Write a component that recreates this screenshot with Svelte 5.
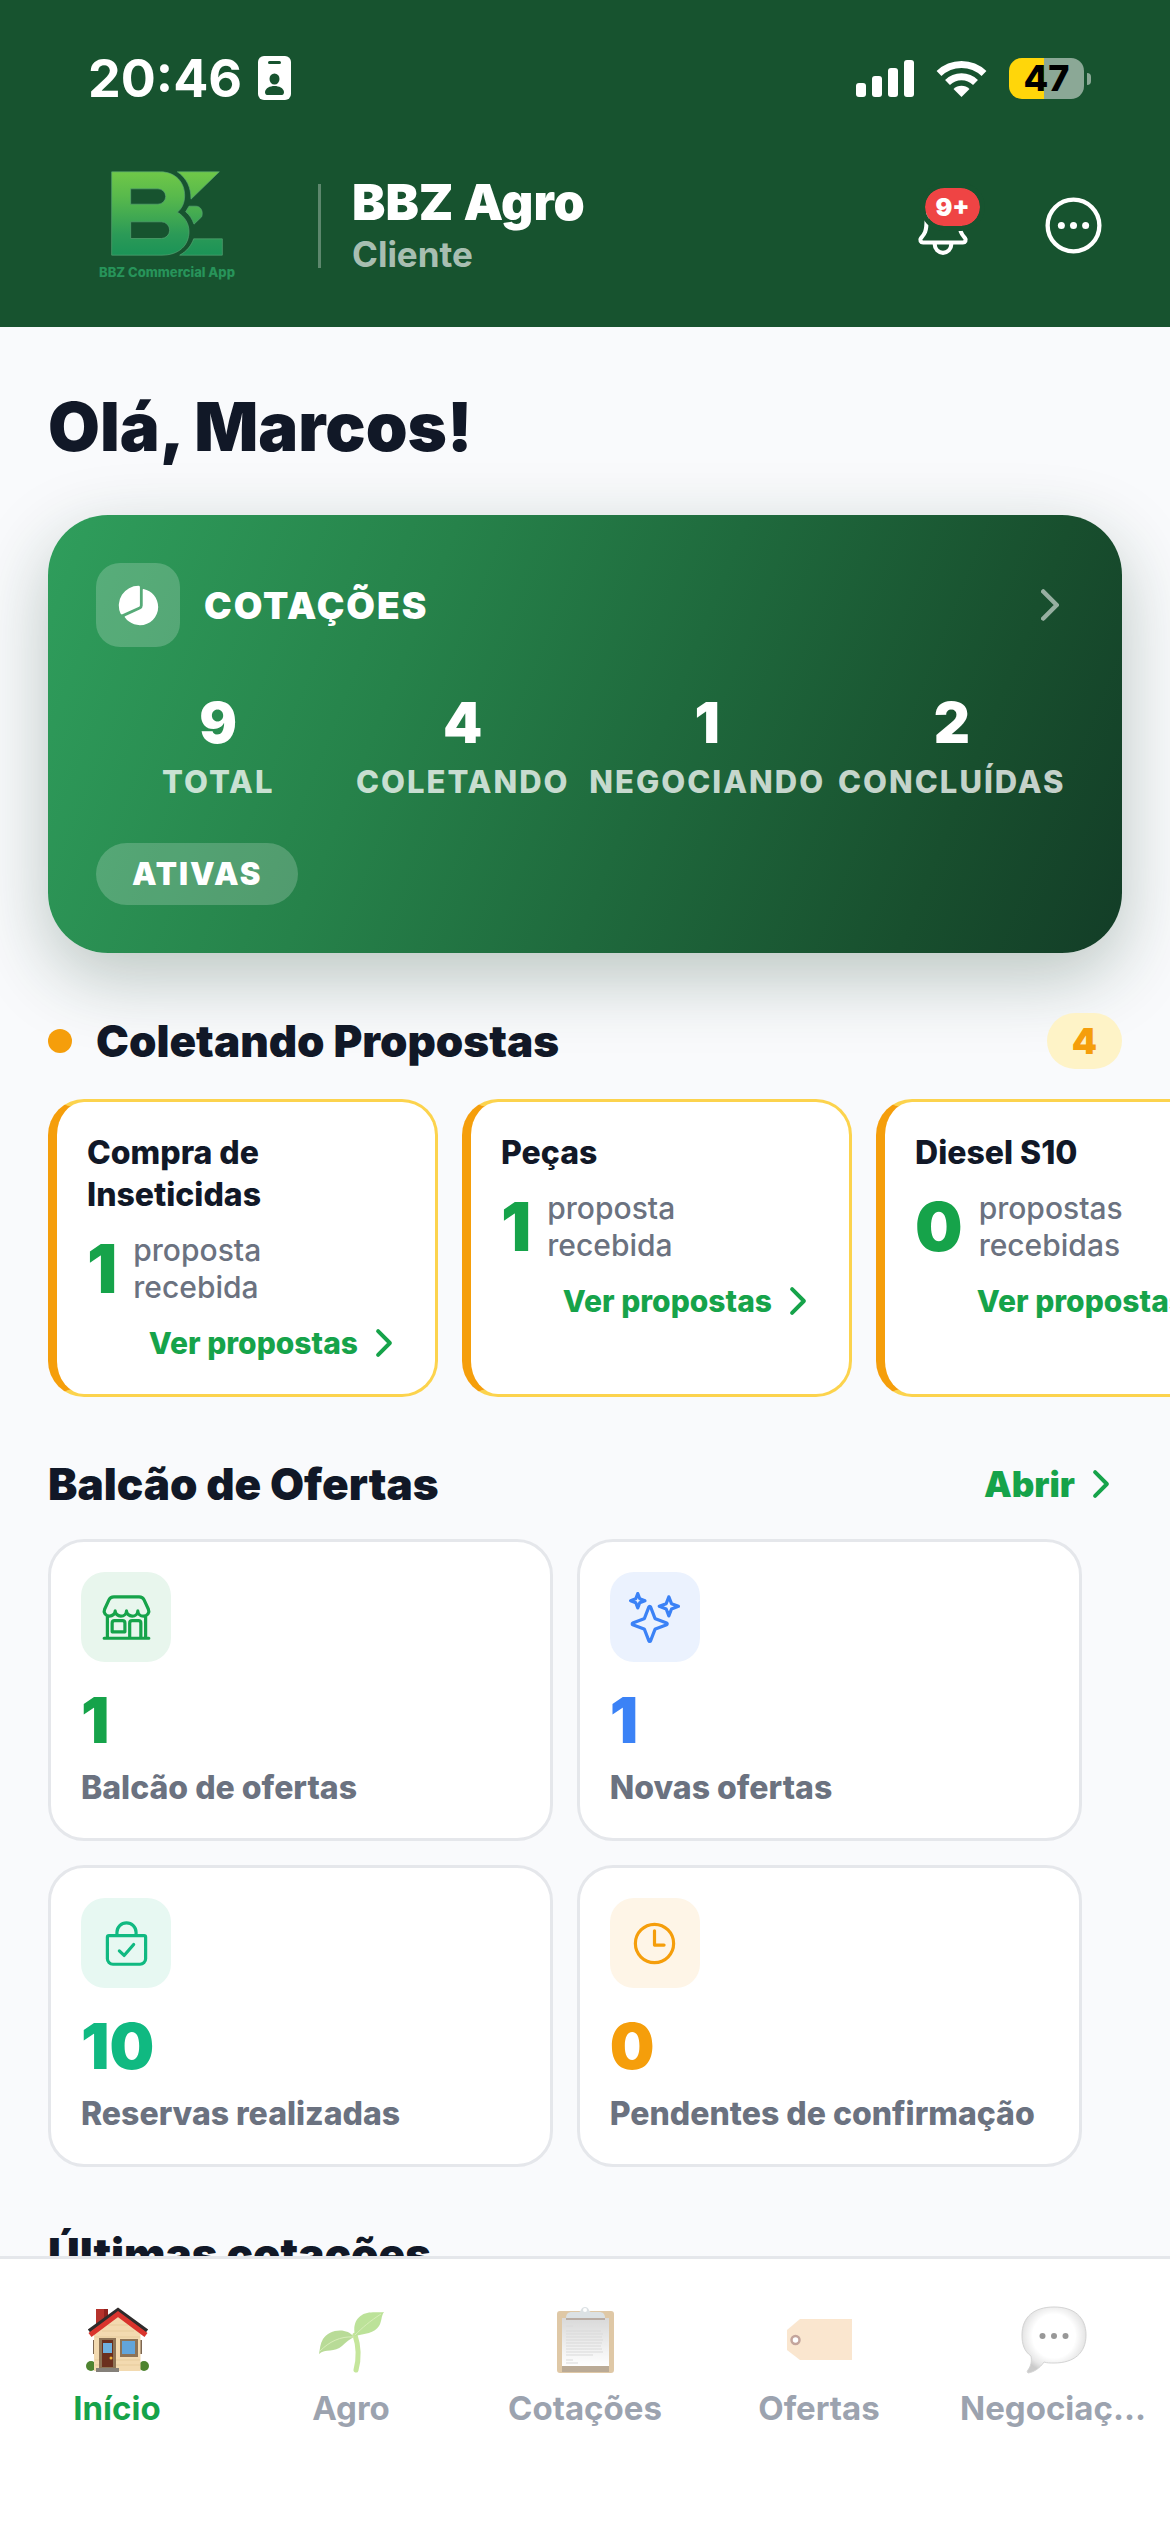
<script lang="ts">
	type Proposal = { title: string; count: number };
	type Offer = { icon: string; value: number; label: string; tone: string };
	type Tab = { icon: string; label: string };

	const stats = [
		{ value: 9, label: 'TOTAL' },
		{ value: 4, label: 'COLETANDO' },
		{ value: 1, label: 'NEGOCIANDO' },
		{ value: 2, label: 'CONCLUÍDAS' }
	];

	const proposals: Proposal[] = [
		{ title: 'Compra de Inseticidas', count: 1 },
		{ title: 'Peças', count: 1 },
		{ title: 'Diesel S10', count: 0 }
	];

	const offers: Offer[] = [
		{ icon: 'store', value: 1, label: 'Balcão de ofertas', tone: 'green' },
		{ icon: 'sparkles', value: 1, label: 'Novas ofertas', tone: 'blue' },
		{ icon: 'bag', value: 10, label: 'Reservas realizadas', tone: 'emerald' },
		{ icon: 'clock', value: 0, label: 'Pendentes de confirmação', tone: 'amber' }
	];

	const tabs: Tab[] = [
		{ icon: 'house', label: 'Início' },
		{ icon: 'sprout', label: 'Agro' },
		{ icon: 'clipboard', label: 'Cotações' },
		{ icon: 'tag', label: 'Ofertas' },
		{ icon: 'bubble', label: 'Negociaç...' }
	];

	let activeTab = $state('house');
</script>

{#snippet chevron()}
	<svg class="chevron" viewBox="0 0 512 512" aria-hidden="true">
		<path d="M184 112l144 144-144 144" />
	</svg>
{/snippet}

{#snippet offerIcon(name: string)}
	<svg class="line-icon" viewBox="0 0 512 512" aria-hidden="true">
		{#if name === 'store'}
			<path d="M448 448V240M64 240v208M382.47 48H129.53c-21.79 0-41.47 12-49.93 30.46L36.3 173c-14.58 31.81 9.63 67.85 47.19 69h2c31.4 0 56.85-25.18 56.85-52.23 0 27 25.46 52.23 56.86 52.23s56.8-23.38 56.8-52.23c0 27 25.45 52.23 56.85 52.23s56.86-23.38 56.86-52.23c0 28.85 25.45 52.23 56.85 52.23h1.95c37.56-1.17 61.77-37.21 47.19-69l-43.3-94.54C423.94 60 404.26 48 382.47 48zM32 464h448M136 288h80a24 24 0 0124 24v88H112v-88a24 24 0 0124-24zM288 464V312a24 24 0 0124-24h64a24 24 0 0124 24v152" />
		{:else if name === 'sparkles'}
			<path d="M259.92 262.91L216.4 149.77a9 9 0 00-16.8 0l-43.52 113.14a9 9 0 01-5.17 5.17L37.77 311.6a9 9 0 000 16.8l113.14 43.52a9 9 0 015.17 5.17l43.52 113.14a9 9 0 0016.8 0l43.52-113.14a9 9 0 015.17-5.17l113.14-43.52a9 9 0 000-16.8l-113.14-43.52a9 9 0 01-5.17-5.17zM108 68L88 16 68 68 16 88l52 20 20 52 20-52 52-20-52-20zM426.67 117.33L400 48l-26.67 69.33L304 144l69.33 26.67L400 240l26.67-69.33L496 144l-69.33-26.67z" />
		{:else if name === 'bag'}
			<path d="M80 176a16 16 0 00-16 16v216c0 30.24 25.76 56 56 56h272c30.24 0 56-24.51 56-54.75V192a16 16 0 00-16-16zM160 176v-32a96 96 0 0196-96 96 96 0 0196 96v32M184 330l48 46 96-110" />
		{:else}
			<path d="M256 64C150 64 64 150 64 256s86 192 192 192 192-86 192-192S362 64 256 64zM256 128v144h96" />
		{/if}
	</svg>
{/snippet}

{#snippet tabIcon(name: string)}
	<svg class="tab-icon" viewBox="0 0 78 78" aria-hidden="true">
		{#if name === 'house'}
			<path fill="#b5322c" d="M18 8h12v18H18z" />
			<path fill="#8f211d" d="M26 8h4v18h-4z" />
			<circle cx="13" cy="65" r="5" fill="#4e8430" />
			<circle cx="66" cy="65" r="5" fill="#4e8430" />
			<path fill="#7d6752" d="M15 39h2v14h-2zM62 39h2v14h-2z" />
			<path fill="#f3dab0" d="M40 14l22.500 19v37H16V33z" />
			<path stroke="#e0c391" stroke-width=".6" d="M30 24h20M24 30h32M17 36h45M17 59h45M17 64h45" />
			<path fill="none" stroke="#2f2b2b" stroke-width="4" d="M11 30L40 9l29 21" />
			<path fill="none" stroke="#d9342d" stroke-width="5" d="M12 34l28-21 28 21" />
			<path fill="#8d7355" d="M21 37h17v30H21z" />
			<path fill="#6b2f1e" d="M24 39h11v27H24z" />
			<path fill="#6fb0df" d="M25 42h9v10h-9z" />
			<circle cx="33" cy="57" r="1.500" fill="#f0b53a" />
			<path fill="#8d7355" d="M42 38h18v18H42z" />
			<path fill="#62a5da" d="M44 40h13v13H44z" />
			<path fill="#85807a" d="M18 67h23v4H18z" />
		{:else if name === 'sprout'}
			<path fill="none" stroke="#8cce3a" stroke-width="5" stroke-linecap="round" d="M43 34c4 12 4 24 1 35" />
			<path fill="#7cc636" d="M43 35c-2-9 0-17 7-21 6-4 16-2 22-3-3 4-2 9-5 14-4 7-15 8-24 10z" />
			<path fill="#74b932" d="M42 36c-4 2-8 5-12 9-7 7-17 2-23 8 1-5 1-10 4-15 6-10 24-12 31-2z" />
			<path fill="none" stroke="#b0dd74" stroke-width="1" d="M43 34c7-7 15-14 26-21M42 36C28 35 17 41 8 50" />
		{:else if name === 'clipboard'}
			<rect x="11" y="10" width="57" height="62" rx="3" fill="#c1924f" />
			<path fill="#77582f" d="M16 64h47v7H16z" />
			<path fill="url(#paper)" d="M16 17h47v48H16z" />
			<path stroke="#b5b5b5" stroke-width="1" d="M20 25h7M20 30h35M20 33h37M20 36h36M20 39h37M20 42h36M20 45h35M20 48h36M20 51h37M20 54h27M20 59h7M20 62h12" />
			<path fill="#735c4b" d="M20 16h39v3H20z" />
			<path fill="#b9c4ca" d="M20 17c0-4 2-6 6-6h7c2 0 2-5 6-5s4 5 6 5h8c4 0 6 2 6 6z" />
			<circle cx="39" cy="9" r="2" fill="#fff" />
		{:else if name === 'tag'}
			<path fill="#f6cfa0" d="M20 18h52v41H20L7 49V29z" />
			<circle cx="15.500" cy="39" r="4" fill="#fff" stroke="#8a4d3c" stroke-width="2.500" />
		{:else}
			<path fill="url(#bubble)" stroke="#aaa" stroke-width="1" d="M40 6c20 0 32 10 32 28S60 62 40 62c-4 0-7 0-10-1-4 6-10 10-16 11-1-1-1-2 0-3 3-4 4-9 3-14C10 50 8 43 8 34 8 16 20 6 40 6z" />
			<g fill="#333">
				<circle cx="28.500" cy="35" r="3" />
				<circle cx="40" cy="35" r="3" />
				<circle cx="51.500" cy="35" r="3" />
			</g>
		{/if}
		<defs>
			<linearGradient id="paper" x2="0" y2="1">
				<stop stop-color="#b4b4b4" />
				<stop offset="1" stop-color="#fff" />
			</linearGradient>
			<radialGradient id="bubble" cy=".44" r=".56">
				<stop offset=".6" stop-color="#fff" />
				<stop offset=".85" stop-color="#d2d2d2" />
				<stop offset="1" stop-color="#999" />
			</radialGradient>
		</defs>
	</svg>
{/snippet}

<div class="screen">
	<header>
		<div class="status-bar">
			<div class="status-left">
				<span class="time">20:46</span>
				<svg class="id-badge" viewBox="0 0 33 44" aria-hidden="true">
					<rect width="33" height="44" rx="6" fill="#fff" />
					<rect x="10" y="5" width="13" height="3" rx="1.500" fill="#17532f" />
					<ellipse cx="16.500" cy="23" rx="5" ry="5.500" fill="#17532f" />
					<path fill="#17532f" d="M7 36c1-8 18-8 19 0 0 2-1 3-2 3H9c-1 0-2-1-2-3z" />
				</svg>
			</div>
			<div class="status-right">
				<svg class="signal" viewBox="0 0 58 37" fill="#fff" aria-hidden="true">
					<rect y="23" width="10" height="14" rx="3" />
					<rect x="16" y="16" width="10" height="21" rx="3" />
					<rect x="32" y="8" width="10" height="29" rx="3" />
					<rect x="48" width="10" height="37" rx="3" />
				</svg>
				<svg class="wifi" viewBox="0 0 51 37" aria-hidden="true">
					<path fill="none" stroke="#fff" stroke-width="7" d="M3 13.500a32.500 32.500 0 0145 0M11.500 22.500a20 20 0 0128 0" />
					<path fill="#fff" d="M17.500 29a11.500 11.500 0 0116 0l-8 8z" />
				</svg>
				<div class="battery"><span>47</span></div>
			</div>
		</div>

		<div class="top-row">
			<div class="logo">
				<svg viewBox="92 59 336 254" aria-hidden="true">
					<defs>
						<linearGradient id="brand" gradientUnits="userSpaceOnUse" x1="0" x2="0" y1="60" y2="312">
							<stop stop-color="#70c848" />
							<stop offset=".3" stop-color="#58b94c" />
							<stop offset=".75" stop-color="#2b9a57" />
							<stop offset="1" stop-color="#1b9357" />
						</linearGradient>
					</defs>
					<g fill="url(#brand)" stroke="#58a574" stroke-width="2">
						<path fill-rule="evenodd" d="M94 61h146c45 0 73 31 73 71 0 23-9 40-22 50 24 14 35 36 35 58 0 42-31 71-81 71H94zM151 112v46h82a23 23 0 000-46zM151 211v50h92a25 25 0 000-50z" />
						<path d="M291 61h126l-85 82c0-35-12-62-41-82z" />
						<path d="M316 181l10-17h20c17 0 23 17 18 32l-23 22c-6-16-13-28-25-37z" />
						<path d="M298 311c21-11 35-29 42-49h86v49z" />
					</g>
				</svg>
				<span>BBZ Commercial App</span>
			</div>
			<div class="account">
				<strong>BBZ Agro</strong>
				<span>Cliente</span>
			</div>
			<button class="bell" aria-label="Notificações">
				<svg viewBox="0 0 512 512" aria-hidden="true">
					<path d="M427.68 351.43C402 320 383.87 304 383.87 217.35 383.87 138 343.35 109.73 310 96c-4.43-1.82-8.6-6-9.95-10.55C294.2 65.54 277.8 48 256 48s-38.21 17.55-44 37.47c-1.35 4.6-5.52 8.71-9.95 10.53-33.39 13.75-73.87 41.92-73.87 121.35C128.13 304 110 320 84.32 351.43 73.68 364.45 83 384 101.61 384h308.88c18.51 0 27.77-19.61 17.19-32.57zM320 384v16a64 64 0 01-128 0v-16" />
				</svg>
				<span class="bell-badge">9+</span>
			</button>
			<button class="more" aria-label="Mais opções">
				<svg viewBox="0 0 512 512" aria-hidden="true">
					<circle cx="256" cy="256" r="192" />
					<g class="dots">
						<circle cx="166" cy="256" r="26" />
						<circle cx="256" cy="256" r="26" />
						<circle cx="346" cy="256" r="26" />
					</g>
				</svg>
			</button>
		</div>
	</header>

	<main>
		<h1>Olá, Marcos!</h1>

		<section class="quotes">
			<div class="quotes-head">
				<span class="quotes-icon">
					<svg viewBox="0 0 512 512" aria-hidden="true">
						<path d="M66.1 357a16 16 0 01-14.61-9.46A224 224 0 01256 32a16 16 0 0116 16v208a16 16 0 01-9.47 14.61l-189.9 84.95A15.93 15.93 0 0166.1 357z" />
						<path d="M313.59 68.18A8 8 0 00304 76v180a48.07 48.07 0 01-28.4 43.82L103.13 377a8 8 0 00-3.35 11.81 208.42 208.42 0 0048.46 50.41A206.32 206.32 0 00272 480c114.69 0 208-93.31 208-208 0-100.45-71.58-184.5-166.41-203.82z" />
					</svg>
				</span>
				<h2>COTAÇÕES</h2>
				{@render chevron()}
			</div>
			<div class="stats">
				{#each stats as stat (stat.label)}
					<div class="stat">
						<strong>{stat.value}</strong>
						<span>{stat.label}</span>
					</div>
				{/each}
			</div>
			<span class="pill">ATIVAS</span>
		</section>

		<section>
			<div class="section-head">
				<span class="dot"></span>
				<h2>Coletando Propostas</h2>
				<span class="count">4</span>
			</div>
			<div class="proposals">
				{#each proposals as proposal (proposal.title)}
					<article class="proposal">
						<h3>{proposal.title}</h3>
						<div class="received">
							<strong>{proposal.count}</strong>
							{#if proposal.count === 1}
								<span>proposta recebida</span>
							{:else}
								<span>propostas recebidas</span>
							{/if}
						</div>
						<a class="link" href="#propostas">Ver propostas {@render chevron()}</a>
					</article>
				{/each}
			</div>
		</section>

		<section>
			<div class="section-head section-head--offers">
				<h2>Balcão de Ofertas</h2>
				<a class="link link--large" href="#ofertas">Abrir {@render chevron()}</a>
			</div>
			<div class="offers">
				{#each offers as offer (offer.label)}
					<article class="offer {offer.tone}">
						<span class="offer-icon">{@render offerIcon(offer.icon)}</span>
						<strong>{offer.value}</strong>
						<span class="offer-label">{offer.label}</span>
					</article>
				{/each}
			</div>
		</section>

		<section>
			<div class="section-head section-head--offers">
				<h2>Últimas cotações</h2>
			</div>
		</section>
	</main>

	<nav>
		{#each tabs as tab (tab.icon)}
			<button class="tab" class:tab--active={activeTab === tab.icon} onclick={() => (activeTab = tab.icon)}>
				{@render tabIcon(tab.icon)}
				<span>{tab.label}</span>
			</button>
		{/each}
	</nav>
</div>

<style>
	:global(body) {
		margin: 0;
		background: #f9fafc;
	}

	.screen {
		display: flex;
		flex-direction: column;
		height: 100vh;
		overflow: hidden;
		color: #111827;
		font-family: Inter, 'Liberation Sans', sans-serif;
	}

	h1,
	h2,
	h3 {
		margin: 0;
		font-weight: 900;
	}

	button {
		padding: 0;
		border: 0;
		background: none;
		color: inherit;
		font-family: inherit;
		cursor: pointer;
	}

	svg {
		display: block;
		flex: none;
	}

	header {
		flex: none;
		padding-bottom: 32px;
		background: #17532f;
		color: #fff;
	}

	.status-bar {
		display: flex;
		align-items: center;
		justify-content: space-between;
		height: 156px;
		padding: 0 86px 0 88px;
	}

	.status-left,
	.status-right {
		display: flex;
		align-items: center;
	}

	.status-left {
		gap: 16px;
	}

	.status-right {
		gap: 22px;
	}

	.time {
		font-size: 52px;
		font-weight: 700;
	}

	.id-badge {
		width: 33px;
		height: 44px;
	}

	.signal {
		width: 58px;
		height: 37px;
	}

	.wifi {
		width: 51px;
		height: 37px;
	}

	.battery {
		position: relative;
		width: 75px;
		height: 41px;
		border-radius: 13px;
		background: linear-gradient(90deg, #ffd60a 47%, #8ba896 47%);
		color: #000;
		font-size: 36px;
		font-weight: 800;
		line-height: 41px;
		text-align: center;
	}

	.battery::after {
		content: '';
		position: absolute;
		top: 15px;
		right: -7px;
		width: 4px;
		height: 12px;
		border-radius: 0 6px 6px 0;
		background: #8ba896;
	}

	.top-row {
		display: flex;
		align-items: center;
		height: 139px;
		padding: 0 62px 0 48px;
	}

	.logo {
		display: flex;
		flex-direction: column;
		align-items: center;
		gap: 8px;
		width: 238px;
		margin-right: 32px;
	}

	.logo svg {
		width: 112px;
		height: 85px;
	}

	.logo span {
		color: #27945a;
		font-size: 13px;
		font-weight: 800;
		line-height: 16px;
		white-space: nowrap;
	}

	.account {
		display: flex;
		flex: 1;
		flex-direction: column;
		justify-content: center;
		height: 84px;
		padding-left: 31px;
		border-left: 3px solid rgba(255, 255, 255, 0.3);
	}

	.account strong {
		font-size: 50px;
		font-weight: 900;
		line-height: 56px;
	}

	.account span {
		color: rgba(255, 255, 255, 0.65);
		font-size: 35px;
		font-weight: 700;
		line-height: 48px;
	}

	.bell {
		position: relative;
		margin-right: 63px;
	}

	.bell svg {
		width: 66px;
		height: 66px;
	}

	.more svg {
		width: 69px;
		height: 69px;
	}

	.bell svg,
	.more svg {
		fill: none;
		stroke: #fff;
		stroke-width: 32;
		stroke-linecap: round;
		stroke-linejoin: round;
	}

	.more .dots {
		fill: #fff;
		stroke: none;
	}

	.bell-badge {
		position: absolute;
		top: -10px;
		left: 10px;
		width: 55px;
		height: 38px;
		border: 5px solid #17532f;
		border-radius: 24px;
		background: #ef4444;
		background-clip: padding-box;
		font-size: 25px;
		font-weight: 900;
		line-height: 38px;
	}

	main {
		flex: 1;
		min-height: 0;
		padding: 60px 48px 0;
		overflow: hidden;
	}

	h1 {
		font-size: 67px;
		line-height: 80px;
	}

	.quotes {
		margin-top: 48px;
		padding: 48px;
		border-radius: 60px;
		background: linear-gradient(112deg, #2f9e5c, #26824a 33%, #1f6a3d 56%, #184f2e 82%, #133d27);
		box-shadow: 0 24px 72px rgba(20, 60, 40, 0.28);
		color: #fff;
	}

	.quotes-head {
		display: flex;
		align-items: center;
		gap: 24px;
	}

	.quotes-icon {
		display: grid;
		place-items: center;
		width: 84px;
		height: 84px;
		border-radius: 24px;
		background: rgba(255, 255, 255, 0.2);
	}

	.quotes-icon svg {
		width: 45px;
		height: 45px;
		fill: #fff;
	}

	.quotes-head h2 {
		flex: 1;
		font-size: 37px;
		letter-spacing: 2px;
	}

	.chevron {
		width: 42px;
		height: 42px;
		fill: none;
		stroke: currentColor;
		stroke-width: 48;
		stroke-linecap: round;
		stroke-linejoin: round;
	}

	.quotes-head .chevron {
		width: 48px;
		height: 48px;
		opacity: 0.55;
	}

	.stats {
		display: grid;
		grid-template-columns: repeat(4, minmax(0, 1fr));
		margin-top: 36px;
	}

	.stat {
		display: flex;
		flex-direction: column;
		align-items: center;
	}

	.stat strong {
		font-size: 56px;
		font-weight: 900;
		line-height: 80px;
	}

	.stat span {
		color: rgba(255, 255, 255, 0.75);
		font-size: 31px;
		font-weight: 800;
		line-height: 38px;
		letter-spacing: 2px;
		white-space: nowrap;
	}

	.pill {
		display: block;
		width: fit-content;
		margin-top: 42px;
		padding: 0 36px;
		border-radius: 31px;
		background: rgba(255, 255, 255, 0.2);
		font-size: 31px;
		font-weight: 900;
		line-height: 62px;
		letter-spacing: 2px;
	}

	.section-head {
		display: flex;
		align-items: center;
		height: 56px;
		margin: 60px 0 30px;
	}

	.section-head--offers {
		height: 62px;
		margin: 56px 0 24px;
	}

	.section-head h2 {
		flex: 1;
		font-size: 44px;
	}

	.dot {
		width: 24px;
		height: 24px;
		margin-right: 24px;
		border-radius: 50%;
		background: #f59e0b;
	}

	.count {
		min-width: 75px;
		border-radius: 30px;
		background: #fef3c7;
		color: #f59e0b;
		font-size: 36px;
		font-weight: 900;
		line-height: 56px;
		text-align: center;
	}

	.proposals {
		display: flex;
		gap: 24px;
		margin: 0 -48px;
		padding: 0 48px;
		overflow-x: auto;
		scrollbar-width: none;
	}

	.proposal {
		box-sizing: border-box;
		flex: none;
		width: 390px;
		padding: 30px;
		border: 3px solid #fcd34d;
		border-left: 9px solid #f59e0b;
		border-radius: 36px;
		background: #fff;
	}

	.proposal h3 {
		font-size: 32px;
		font-weight: 800;
		line-height: 42px;
	}

	.received {
		display: flex;
		align-items: center;
		gap: 16px;
		margin: 16px 0;
	}

	.received strong {
		color: #16a34a;
		font-size: 67px;
		font-weight: 900;
		line-height: 74px;
	}

	.received span {
		width: min-content;
		color: #6b7280;
		font-size: 30px;
		font-weight: 500;
		line-height: 37px;
	}

	.link {
		display: flex;
		align-items: center;
		justify-content: flex-end;
		gap: 5px;
		color: #16a34a;
		font-size: 30px;
		font-weight: 800;
		line-height: 42px;
		text-decoration: none;
	}

	.link--large {
		font-size: 35px;
		font-weight: 900;
	}

	.offers {
		display: flex;
		flex-wrap: wrap;
		gap: 24px;
	}

	.offer {
		box-sizing: border-box;
		display: flex;
		flex-direction: column;
		width: 47%;
		padding: 30px;
		border: 3px solid #e5e7eb;
		border-radius: 36px;
		background: #fff;
	}

	.offer-icon {
		display: grid;
		place-items: center;
		width: 90px;
		height: 90px;
		margin-bottom: 14px;
		border-radius: 24px;
	}

	.line-icon {
		width: 51px;
		height: 51px;
		fill: none;
		stroke: currentColor;
		stroke-width: 32;
		stroke-linecap: round;
		stroke-linejoin: round;
	}

	.offer strong {
		margin-bottom: 4px;
		font-size: 63px;
		font-weight: 900;
		line-height: 88px;
	}

	.offer-label {
		color: #6b7280;
		font-size: 32px;
		font-weight: 800;
		line-height: 40px;
		white-space: nowrap;
	}

	.green {
		color: #16a34a;
	}

	.green .offer-icon {
		background: #e8f6ed;
	}

	.blue {
		color: #3b82f6;
	}

	.blue .offer-icon {
		background: #ebf2fe;
	}

	.emerald {
		color: #10b981;
	}

	.emerald .offer-icon {
		background: #e7f8f2;
	}

	.amber {
		color: #f59e0b;
	}

	.amber .offer-icon {
		background: #fef5e7;
	}

	nav {
		display: grid;
		flex: none;
		grid-template-columns: repeat(5, minmax(0, 1fr));
		padding: 42px 0 104px;
		border-top: 3px solid #e5e7eb;
		background: #fff;
	}

	.tab {
		display: flex;
		flex-direction: column;
		align-items: center;
		gap: 9px;
		color: #9ca3af;
		font-size: 33px;
		font-weight: 700;
		line-height: 40px;
		white-space: nowrap;
	}

	.tab-icon {
		width: 78px;
		height: 78px;
		opacity: 0.5;
	}

	.tab--active {
		color: #16a34a;
	}

	.tab--active .tab-icon {
		opacity: 1;
	}
</style>
